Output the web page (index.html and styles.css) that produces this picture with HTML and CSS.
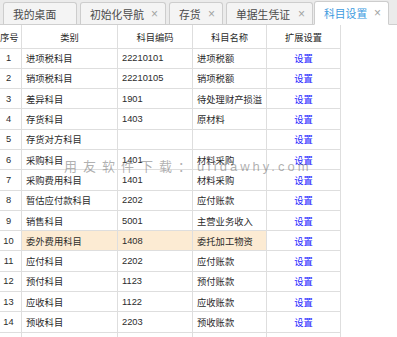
FILE: index.html
```html
<!DOCTYPE html>
<html lang="zh">
<head>
<meta charset="utf-8">
<link rel="stylesheet" href="styles.css">
</head>
<body>
<div class="page">
  <div class="tabbar">
    <div class="tab t1"><span class="label">我的桌面</span></div>
    <div class="tab t2"><span class="label">初始化导航</span><span class="close">×</span></div>
    <div class="tab t3"><span class="label">存货</span><span class="close">×</span></div>
    <div class="tab t4"><span class="label">单据生凭证</span><span class="close">×</span></div>
    <div class="tab t5 active"><span class="label">科目设置</span><span class="close">×</span></div>
  </div>
  <div class="grid">
    <table>
      <colgroup>
        <col class="c1"><col class="c2"><col class="c3"><col class="c4"><col class="c5">
      </colgroup>
      <thead>
        <tr><th>序号</th><th>类别</th><th>科目编码</th><th>科目名称</th><th>扩展设置</th></tr>
      </thead>
      <tbody>
        <tr><td class="no">1</td><td>进项税科目</td><td>22210101</td><td>进项税额</td><td class="op"><a>设置</a></td></tr>
        <tr><td class="no">2</td><td>销项税科目</td><td>22210105</td><td>销项税额</td><td class="op"><a>设置</a></td></tr>
        <tr><td class="no">3</td><td>差异科目</td><td>1901</td><td>待处理财产损溢</td><td class="op"><a>设置</a></td></tr>
        <tr><td class="no">4</td><td>存货科目</td><td>1403</td><td>原材料</td><td class="op"><a>设置</a></td></tr>
        <tr><td class="no">5</td><td>存货对方科目</td><td></td><td></td><td class="op"><a>设置</a></td></tr>
        <tr><td class="no">6</td><td>采购科目</td><td>1401</td><td>材料采购</td><td class="op"><a>设置</a></td></tr>
        <tr><td class="no">7</td><td>采购费用科目</td><td>1401</td><td>材料采购</td><td class="op"><a>设置</a></td></tr>
        <tr><td class="no">8</td><td>暂估应付款科目</td><td>2202</td><td>应付账款</td><td class="op"><a>设置</a></td></tr>
        <tr><td class="no">9</td><td>销售科目</td><td>5001</td><td>主营业务收入</td><td class="op"><a>设置</a></td></tr>
        <tr class="hl"><td class="no">10</td><td>委外费用科目</td><td>1408</td><td>委托加工物资</td><td class="op"><a>设置</a></td></tr>
        <tr><td class="no">11</td><td>应付科目</td><td>2202</td><td>应付账款</td><td class="op"><a>设置</a></td></tr>
        <tr><td class="no">12</td><td>预付科目</td><td>1123</td><td>预付账款</td><td class="op"><a>设置</a></td></tr>
        <tr><td class="no">13</td><td>应收科目</td><td>1122</td><td>应收账款</td><td class="op"><a>设置</a></td></tr>
        <tr><td class="no">14</td><td>预收科目</td><td>2203</td><td>预收账款</td><td class="op"><a>设置</a></td></tr>
        <tr><td class="no"></td><td></td><td></td><td></td><td class="op"></td></tr>
      </tbody>
    </table>
    <div class="watermark"><span class="wm-cn">用友软件下载：</span><span class="wm-en">ufidawhy.com</span></div>
  </div>
</div>
</body>
</html>
```

FILE: styles.css
```css
html, body {
  margin: 0;
  padding: 0;
  background: #fff;
}
.page {
  width: 397px;
  height: 337px;
  overflow: hidden;
  font-family: "Liberation Sans", "Noto Sans CJK SC", sans-serif;
  color: #333;
}
.tabbar {
  height: 25px;
  box-sizing: border-box;
  background: #ebebeb;
  border-bottom: 1px solid #cfcfcf;
  display: flex;
  align-items: flex-end;
  padding-left: 3px;
  gap: 3px;
}
.tab {
  height: 23px;
  box-sizing: border-box;
  border: 1px solid #cdcdcd;
  border-radius: 3px 3px 0 0;
  background: #f4f4f4;
  display: flex;
  align-items: center;
  font-size: 10.8px;
  color: #4a4a4a;
  padding-left: 9px;
  margin-bottom: -1px;
  border-bottom: 1px solid #cfcfcf;
}
.tab .close {
  color: #a3a3a3;
  font-size: 12px;
  margin-left: auto;
  padding-right: 7px;
}
.t1 { width: 74px; }
.t2 { width: 86px; }
.t3 { width: 54px; }
.t4 { width: 87px; margin-right: -2px; }
.t5 { width: 75px; }
.tab.active {
  background: #fff;
  color: #3b9be0;
  height: 24px;
  border-bottom: 1px solid #fff;
}
.grid {
  position: relative;
  overflow: hidden;
  height: 312px;
}
table {
  margin-left: -5px;
  border-collapse: collapse;
  table-layout: fixed;
  width: 345px;
  font-size: 9.3px;
}
col.c1 { width: 26px; }
col.c2 { width: 96px; }
col.c3 { width: 75px; }
col.c4 { width: 74px; }
col.c5 { width: 74px; }
th, td {
  border: 1px solid #dedede;
  padding: 0 4px;
  white-space: nowrap;
  overflow: hidden;
  text-align: left;
  color: #2b2b2b;
}
thead tr { height: 23px; }
thead th {
  border-top: none;
  text-align: center;
  font-weight: normal;
  padding-top: 2px;
}
tbody tr { height: 20.3px; }
td.no {
  text-align: center;
  padding: 0;
}
td.op {
  text-align: center;
}
td.op a {
  color: #2424ff;
}
tr.hl td {
  background: #fcebd3;
}
tr.hl td.no, tr.hl td.op {
  background: #fff;
}
.watermark {
  position: absolute;
  left: 64px;
  top: 131px;
  font-size: 13px;
  color: rgba(110, 110, 110, 0.55);
  white-space: nowrap;
  pointer-events: none;
}
.wm-cn { letter-spacing: 6px; }
.wm-en { letter-spacing: 3px; }
```
